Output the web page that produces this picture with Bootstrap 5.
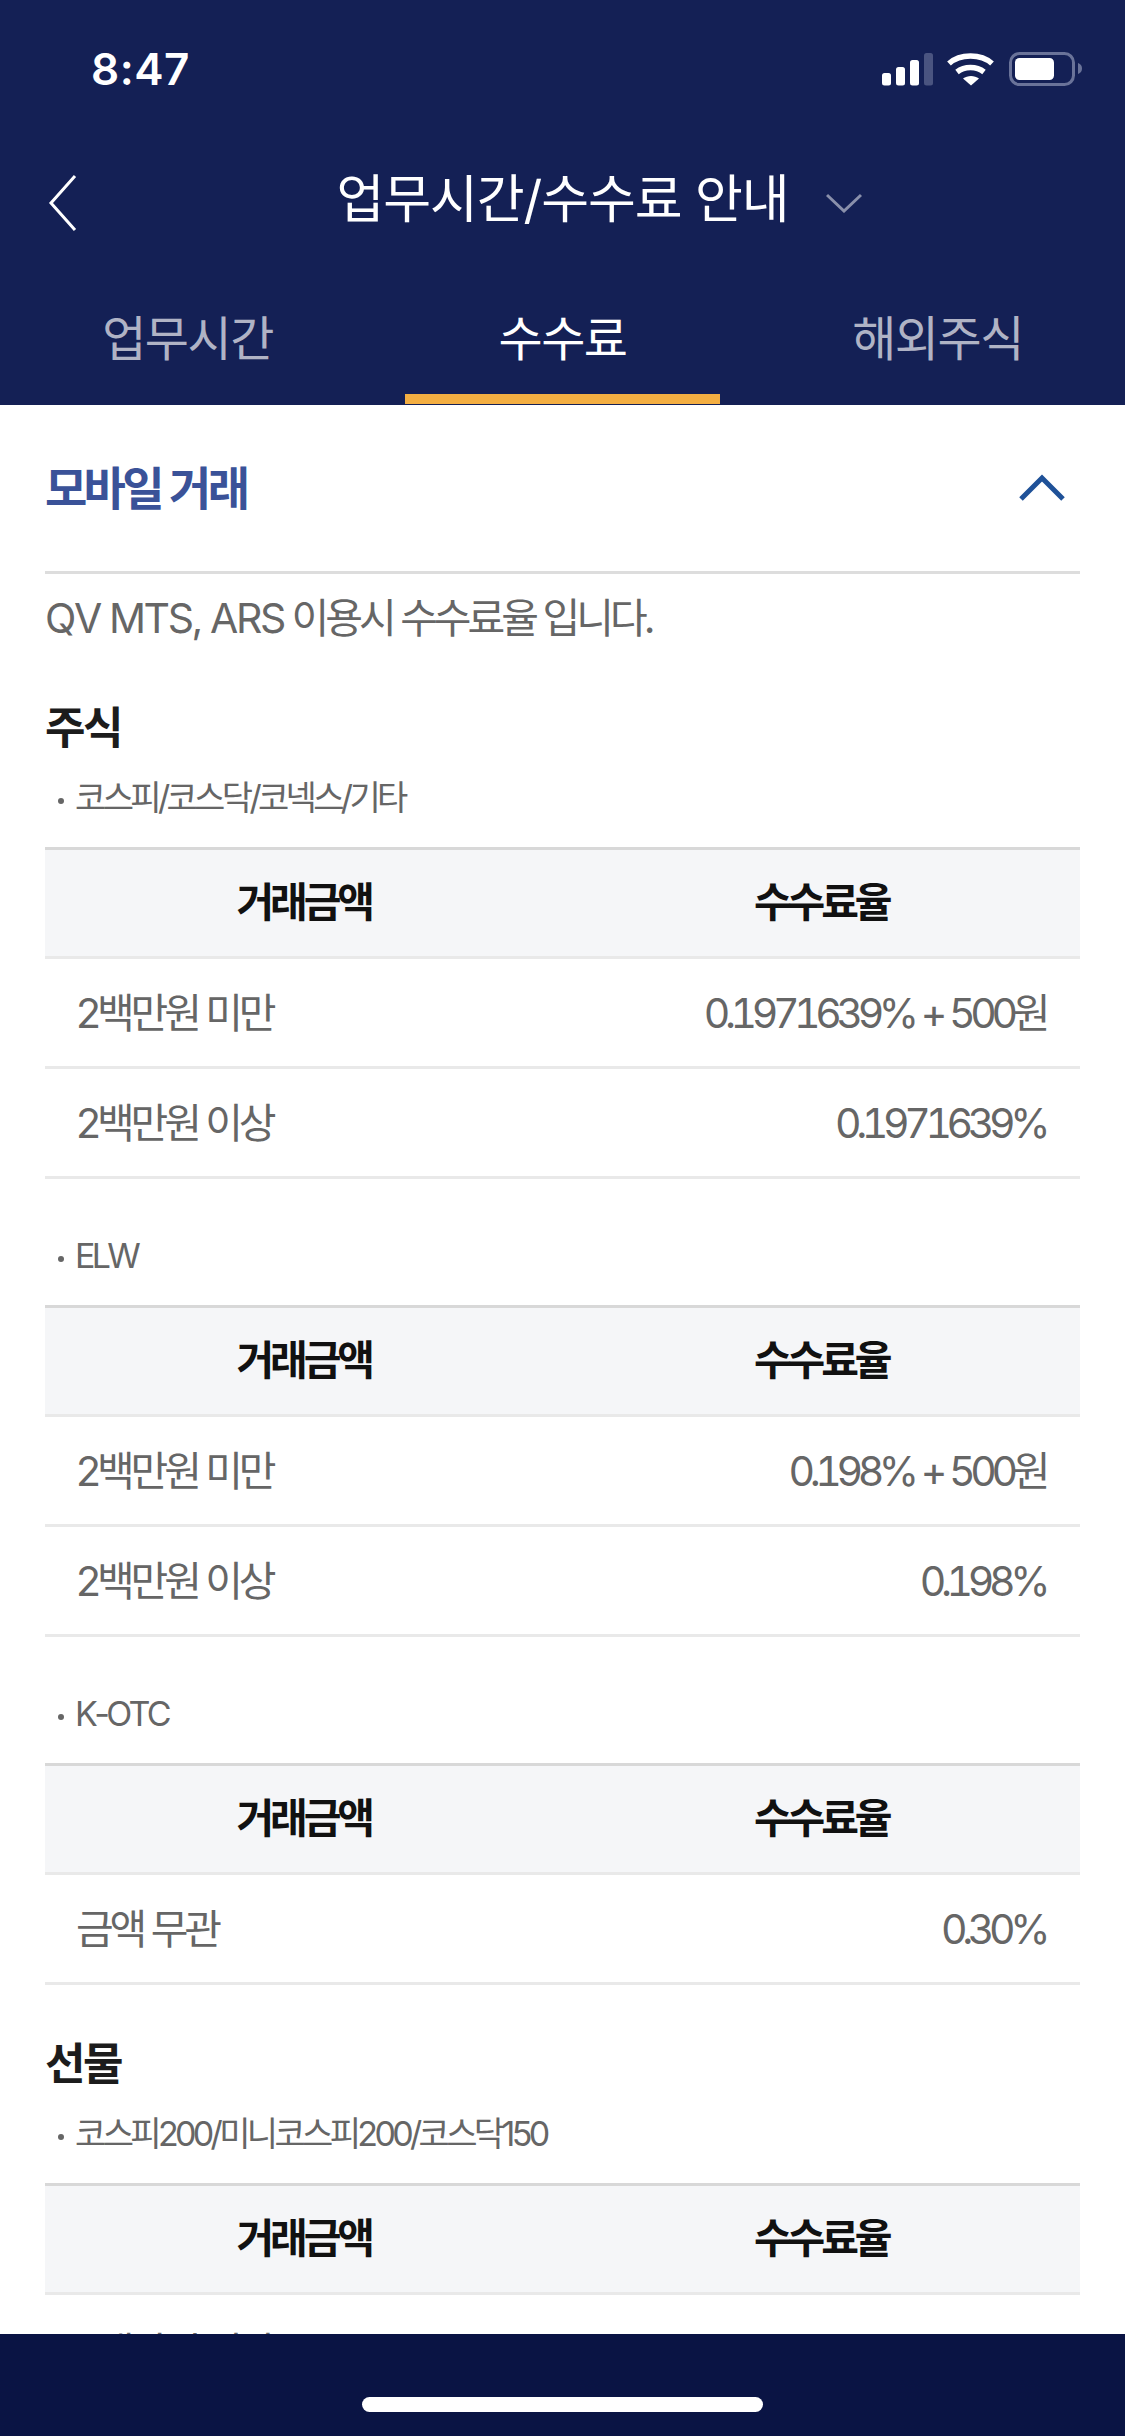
<!DOCTYPE html>
<html lang="ko">
<head>
<meta charset="utf-8">
<title>업무시간/수수료 안내</title>
<link href="https://cdn.jsdelivr.net/npm/bootstrap@5.3.0/dist/css/bootstrap.min.css" rel="stylesheet">
<style>
html,body{margin:0;width:1125px;height:2436px;overflow:hidden}
body{font-family:Inter,"Noto Sans CJK KR","Liberation Sans",sans-serif;background:#fff;color:#666;font-kerning:none}
.shell{width:1125px;height:2436px}
.top-area{height:405px;background:#142055;flex:none}
.status-row{height:138px;padding:42px 43px 0 91px}
.clock{font-weight:600;font-size:44px;line-height:54px;color:#fff;letter-spacing:.5px}
.status-icons{margin-top:10px}
.title-row{height:118px;padding:12px 48px 0}
.title-side{flex:1 1 0}
.title-txt{font-size:52px;letter-spacing:-1.1px;line-height:70px;color:#fff;font-weight:400;margin-bottom:6px}
.chev-down{margin-left:38px}
.tabs-row{height:149px;margin:0}
.tab-cell{flex:1 1 0;text-align:center;color:#b0b3c5;font-size:48px;letter-spacing:-1.5px;line-height:64px;padding:51px 30px 0;position:relative}
.tab-cell.is-on{color:#fff}
.tab-cell.is-on::after{content:"";position:absolute;left:30px;right:30px;bottom:1px;height:10px;background:#f3ae42}
.body-area{flex:1 1 auto;overflow:hidden;padding:0 45px}
.acc-head{height:169px;border-bottom:3px solid #ddd}
.acc-title{font-size:46px;font-weight:700;color:#3a5298;letter-spacing:-3.7px;word-spacing:1px;line-height:60px}
.acc-chev{margin-right:15px;margin-top:-1px}
.intro{font-size:41px;letter-spacing:-4px;line-height:54px;margin:0;padding-top:17px}
.intro-latin{letter-spacing:-2.4px}
.sec-title{font-size:44px;font-weight:700;color:#1c1c1c;letter-spacing:-2.4px;line-height:60px;margin:0}
.sec-title.first{margin-top:53px}
.sec-title.later{margin-top:49px}
.sub-note{font-size:34px;letter-spacing:-3.65px;line-height:44px;margin:18px 0 27px;display:flex;align-items:center}
.sub-note.gap{margin-top:55px}
.sub-note::before{content:"";width:6px;height:6px;border-radius:50%;background:#666;margin:6px 11px 0 13px;flex:none}
.fee-tbl{--bs-table-bg:transparent;margin:0;width:100%;table-layout:fixed;border-top:3px solid #d8d8d8}
.fee-tbl th,.fee-tbl td{height:110px;padding:0 33px;vertical-align:middle;border-bottom:3px solid #e9e9e9;font-size:41px;letter-spacing:-4.1px;box-shadow:none}
.fee-tbl thead th{background:#f5f6f8;color:#111;font-weight:700;text-align:center;height:109px}
.fee-tbl td{color:#666;padding-top:2px}
.fee-tbl td:first-child{padding-left:31px}
.fee-tbl td:last-child{text-align:right;font-variant-numeric:tabular-nums;letter-spacing:-5.4px;word-spacing:1.5px;padding-right:35px}
.fee-tbl .tail-row td{padding-top:9px}
.bottom-area{height:102px;background:#0a1444;flex:none}
.home-bar{width:401px;height:15px;border-radius:8px;background:#fff;margin-bottom:24px}
</style>
</head>
<body>
<div class="shell d-flex flex-column">
  <header class="top-area">
    <div class="status-row d-flex justify-content-between align-items-start">
      <span class="clock">8:47</span>
      <svg class="status-icons" width="200" height="34" viewBox="0 0 200 34" aria-hidden="true">
        <g fill="#fff"><rect x="0" y="21" width="9" height="12.500" rx="2.500"/><rect x="14" y="15" width="9" height="18.500" rx="2.500"/><rect x="28" y="8" width="9" height="25.500" rx="2.500"/></g>
        <rect x="42" y="1" width="9" height="32.500" rx="2.500" fill="#4a5480"/>
        <g fill="none" stroke="#fff" stroke-width="5.500"><path d="M67 11.500c11-10 32-10 43 0"/><path d="M75 20c7.500-6 19.500-6 27 0"/></g>
        <path d="M89 33.500 81 26.500c4.500-3.500 11.500-3.500 16 0z" fill="#fff"/>
        <rect x="128.500" y="1.500" width="63" height="31" rx="9" fill="none" stroke="#6a7399" stroke-width="3"/>
        <rect x="133" y="6" width="39" height="22" rx="4.500" fill="#fff"/>
        <path d="M196 11c3 1 4 3 4 5.500s-1 4.500-4 5.500z" fill="#6a7399"/>
      </svg>
    </div>
    <div class="title-row d-flex align-items-center">
      <div class="title-side">
        <svg class="d-block" width="30" height="58" viewBox="0 0 30 58" aria-hidden="true"><path d="M27 2 3 29l24 27" fill="none" stroke="#fff" stroke-width="3"/></svg>
      </div>
      <span class="title-txt">업무시간/수수료 안내</span>
      <div class="title-side d-flex align-items-center">
        <svg class="chev-down" width="36" height="20" viewBox="0 0 36 20" aria-hidden="true"><path d="M1 2l17 16L35 2" fill="none" stroke="#8a90ab" stroke-width="3"/></svg>
      </div>
    </div>
    <nav class="tabs-row d-flex">
      <div class="tab-cell">업무시간</div>
      <div class="tab-cell is-on">수수료</div>
      <div class="tab-cell">해외주식</div>
    </nav>
  </header>
  <main class="body-area">
    <div class="acc-head d-flex justify-content-between align-items-center">
      <span class="acc-title">모바일 거래</span>
      <svg class="acc-chev" width="46" height="28" viewBox="0 0 46 28" aria-hidden="true"><path d="M2 25 23 4l21 21" fill="none" stroke="#1f5198" stroke-width="5"/></svg>
    </div>
    <p class="intro"><span class="intro-latin">QV MTS, ARS</span> 이용시 수수료율 입니다.</p>
    <h2 class="sec-title first">주식</h2>
    <p class="sub-note">코스피/코스닥/코넥스/기타</p>
    <table class="table fee-tbl">
      <thead><tr><th>거래금액</th><th>수수료율</th></tr></thead>
      <tbody>
        <tr><td>2백만원 미만</td><td>0.1971639% + 500원</td></tr>
        <tr><td>2백만원 이상</td><td>0.1971639%</td></tr>
      </tbody>
    </table>
    <p class="sub-note gap">ELW</p>
    <table class="table fee-tbl">
      <thead><tr><th>거래금액</th><th>수수료율</th></tr></thead>
      <tbody>
        <tr><td>2백만원 미만</td><td>0.198% + 500원</td></tr>
        <tr><td>2백만원 이상</td><td>0.198%</td></tr>
      </tbody>
    </table>
    <p class="sub-note gap">K-OTC</p>
    <table class="table fee-tbl">
      <thead><tr><th>거래금액</th><th>수수료율</th></tr></thead>
      <tbody>
        <tr><td>금액 무관</td><td>0.30%</td></tr>
      </tbody>
    </table>
    <h2 class="sec-title later">선물</h2>
    <p class="sub-note">코스피200/미니코스피200/코스닥150</p>
    <table class="table fee-tbl">
      <thead><tr><th>거래금액</th><th>수수료율</th></tr></thead>
      <tbody>
        <tr class="tail-row"><td>2백만원 미만</td><td></td></tr>
      </tbody>
    </table>
  </main>
  <footer class="bottom-area d-flex justify-content-center align-items-end">
    <div class="home-bar"></div>
  </footer>
</div>
<script src="https://cdn.jsdelivr.net/npm/bootstrap@5.3.0/dist/js/bootstrap.bundle.min.js"></script>
</body>
</html>
